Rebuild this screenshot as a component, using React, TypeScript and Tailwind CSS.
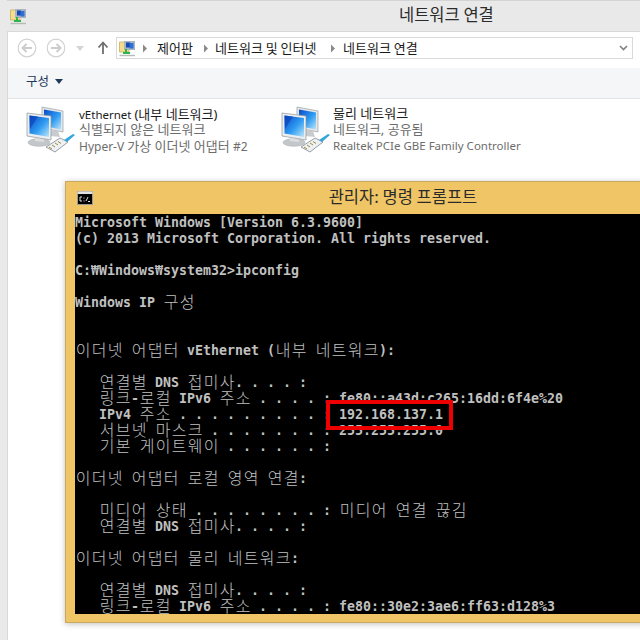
import { Fragment } from 'react';

const rows = [
  'Microsoft Windows [Version 6.3.9600]',
  '(c) 2013 Microsoft Corporation. All rights reserved.',
  '',
  'C:₩Windows₩system32>ipconfig',
  '',
  'Windows IP 구성',
  '',
  '',
  '이더넷 어댑터 vEthernet (내부 네트워크):',
  '',
  '   연결별 DNS 접미사. . . . :',
  '   링크-로컬 IPv6 주소 . . . . : fe80::a43d:c265:16dd:6f4e%20',
  '   IPv4 주소 . . . . . . . . . : 192.168.137.1',
  '   서브넷 마스크 . . . . . . . : 255.255.255.0',
  '   기본 게이트웨이 . . . . . . :',
  '',
  '이더넷 어댑터 로컬 영역 연결:',
  '',
  '   미디어 상태 . . . . . . . . : 미디어 연결 끊김',
  '   연결별 DNS 접미사. . . . :',
  '',
  '이더넷 어댑터 물리 네트워크:',
  '',
  '   연결별 DNS 접미사. . . . :',
  '   링크-로컬 IPv6 주소 . . . . : fe80::30e2:3ae6:ff63:d128%3',
];

// hangul takes two console cells, everything else one
function ConsoleRow({ text }: { text: string }) {
  return (
    <div className="h-4 leading-4 whitespace-pre">
      {Array.from(text).map((ch, i) =>
        /[가-힣]/.test(ch) ? (
          <span key={i} className="inline-block h-4 w-4 text-center align-top font-['Noto_Sans_CJK_KR'] text-[16px] font-light leading-[14px]">
            {ch}
          </span>
        ) : (
          <span key={i} className="mt-[2px] inline-block h-[14px] w-2 align-top text-center leading-[14px]">
            {ch === ' ' ? '\u00a0' : ch}
          </span>
        ),
      )}
    </div>
  );
}

function NetworkIcon() {
  return (
    <svg width="50" height="50" viewBox="0 0 50 50" className="shrink-0">
      <defs>
        <linearGradient id="scr" x1="0" y1="0" x2="1" y2="1">
          <stop offset="0" stopColor="#0a49c8" />
          <stop offset="0.55" stopColor="#2f9cf2" />
          <stop offset="1" stopColor="#bfe6fb" />
        </linearGradient>
      </defs>
      {/* back monitor */}
      <path d="M16 2 L37 6 L37 27 L16 23 Z" fill="#e4e6e8" stroke="#9aa0a6" strokeWidth="0.7" />
      <path d="M18 4.5 L35 7.5 L35 24.5 L18 21 Z" fill="url(#scr)" />
      <path d="M24 25 L32 26 L34 32 L24 31 Z" fill="#c9cccf" />
      {/* front monitor */}
      <path d="M1 8 L25 11 L25 35 L1 31 Z" fill="#eceef0" stroke="#8e959b" strokeWidth="0.7" />
      <path d="M3.5 10.5 L23 13 L23 32 L3.5 28.5 Z" fill="url(#scr)" />
      <path d="M3.5 10.5 L12 11.5 L4 24 Z" fill="#0a3fb8" opacity="0.6" />
      <ellipse cx="13" cy="37.5" rx="11" ry="3.8" fill="#c4c7ca" stroke="#a4a8ac" strokeWidth="0.5" />
      <path d="M9 33 L18 34.5 L18 37 L9 36 Z" fill="#dcdee0" />
      {/* plug */}
      <path d="M20 42 L34 33 L42 37 L29 47 Z" fill="#eef1f3" stroke="#7d8790" strokeWidth="0.8" />
      <path d="M23 42 L26 44 M26 40 L29 42 M29 38 L32 40 M32 36.5 L35 38.5" stroke="#a08a3c" strokeWidth="1" />
      <path d="M38 35 L47 29 L49 30 L41 37 Z" fill="#35a5dc" />
    </svg>
  );
}

function FolderIcon() {
  return (
    <svg width="17" height="17" viewBox="0 0 17 17" className="shrink-0">
      <path d="M0.5 2 H5 L6 3 H10 V12 H0.5 Z" fill="#f5dc8c" stroke="#c9ae5c" strokeWidth="0.8" />
      <path d="M5 1 H16 V10 H5 Z" fill="#aab4c0" />
      <path d="M7 2.5 H11 V7.5 H7 Z" fill="#1747b4" />
      <path d="M10.5 3 H14.5 V8.5 H10.5 Z" fill="#2c6fd6" />
      <path d="M7 9 V13 M4 13 H11" stroke="#2fb34c" strokeWidth="2" />
      <path d="M0.5 15.5 H16" stroke="#b4bcb6" strokeWidth="1.4" />
    </svg>
  );
}

function NavCircle({ dir }: { dir: 'left' | 'right' }) {
  return (
    <svg width="20" height="20" viewBox="0 0 20 20">
      <circle cx="10" cy="10" r="8.8" fill="#fff" stroke="#d2d2d2" strokeWidth="1.2" />
      <path
        d={dir === 'left' ? 'M15 10 H5.5 M9.5 6 L5.5 10 L9.5 14' : 'M5 10 H14.5 M10.5 6 L14.5 10 L10.5 14'}
        fill="none"
        stroke="#cdcdcd"
        strokeWidth="2"
      />
    </svg>
  );
}

function Crumb() {
  return (
    <svg width="6" height="9" viewBox="0 0 6 9" className="shrink-0">
      <path d="M1 0.5 L5 4.5 L1 8.5 Z" fill="#8a8a8a" />
    </svg>
  );
}

export default function App() {
  return (
    <div className="relative h-[640px] w-[640px] overflow-hidden bg-white font-['Noto_Sans','Noto_Sans_CJK_KR',sans-serif]">
      {/* explorer window */}
      <div className="flex h-full flex-col bg-[#e9e9e9] pl-[7px]">
        <header className="relative flex h-[31px] shrink-0 items-center border-t border-[#d4d4d4]">
          <span className="ml-[3px]">
            <FolderIcon />
          </span>
          <span className="absolute left-[392px] top-[3px] whitespace-nowrap font-['Noto_Sans_CJK_KR'] text-[16.5px] leading-5 text-[#2b2b2b]">
            네트워크 연결
          </span>
        </header>
        <main className="flex min-h-0 flex-1 flex-col border-l border-t border-[#d9d9d9] bg-white">
          <div className="flex h-[36px] shrink-0 items-center pb-[4px] pl-[9px]">
            <NavCircle dir="left" />
            <span className="ml-[9px]">
              <NavCircle dir="right" />
            </span>
            <svg width="8" height="5" viewBox="0 0 8 5" className="ml-[10px]">
              <path d="M0 0 H8 L4 5 Z" fill="#d4d4d4" />
            </svg>
            <svg width="12" height="14" viewBox="0 0 12 14" className="ml-[13px]">
              <path d="M6 13 V2 M1.5 6.5 L6 1.5 L10.5 6.5" fill="none" stroke="#6f6f6f" strokeWidth="1.8" />
            </svg>
            <div className="ml-[7px] flex h-[22px] w-[517px] shrink-0 items-center border border-[#d9d9d9] pl-[2px] font-['Noto_Sans_CJK_KR'] text-[13px] text-[#1a1a1a]">
              <FolderIcon />
              <span className="ml-[6px]"><Crumb /></span>
              <span className="ml-[9px] w-[46px]">제어판</span>
              <Crumb />
              <span className="ml-[6px] w-[115px] whitespace-nowrap">네트워크 및 인터넷</span>
              <Crumb />
              <span className="ml-[7px] whitespace-nowrap">네트워크 연결</span>
              <svg width="9" height="6" viewBox="0 0 9 6" className="ml-auto mr-[4px]">
                <path d="M1 1 L4.5 4.5 L8 1" fill="none" stroke="#808080" strokeWidth="1.6" />
              </svg>
            </div>
          </div>
          <div className="flex h-[31px] shrink-0 items-center border-b border-[#e3e4e6] bg-[#f5f6f7] pb-[3px] pl-[18px] font-['Noto_Sans_CJK_KR'] text-[12.5px] text-[#1e395b]">
            구성
            <svg width="8" height="5" viewBox="0 0 8 5" className="ml-[6px]">
              <path d="M0 0 H8 L4 5 Z" fill="#1e395b" />
            </svg>
          </div>
          <div className="flex flex-1 items-start pl-[18px] pt-[6px] text-[11.5px] leading-4">
            <div className="flex w-[255px] shrink-0 gap-[3px]">
              <NetworkIcon />
              <div className="pt-[1px] text-[#6d6d6d]">
                <div className="h-4 whitespace-nowrap text-[#1a1a1a]">
                  vEthernet <span className="text-[13px]">(내부 네트워크)</span>
                </div>
                <div className="h-4 whitespace-nowrap text-[13px] leading-[14px]">식별되지 않은 네트워크</div>
                <div className="h-4 whitespace-nowrap text-[12px]">
                  Hyper-V <span className="text-[13px]">가상 이더넷 어댑터</span> #2
                </div>
              </div>
            </div>
            <div className="flex gap-[2px]">
              <NetworkIcon />
              <div className="pt-[1px] text-[#6d6d6d]">
                <div className="h-4 whitespace-nowrap text-[13px] leading-[14px] text-[#1a1a1a]">물리 네트워크</div>
                <div className="h-4 whitespace-nowrap text-[13px] leading-[14px]">네트워크, 공유됨</div>
                <div className="h-4 whitespace-nowrap">Realtek PCIe GBE Family Controller</div>
              </div>
            </div>
          </div>
        </main>
      </div>

      {/* command prompt over the explorer window */}
      <section className="absolute left-[65px] top-[181px] flex w-[676px] flex-col border border-[#c9a85f] bg-[#f0c566] shadow-[0_1px_6px_rgba(0,0,0,0.25)]">
        <div className="relative flex h-[32px] items-center pl-[11px]">
          <svg width="16" height="14" viewBox="0 0 16 14">
            <rect width="16" height="14" fill="#9a9a9a" />
            <rect x="0.5" y="0.5" width="15" height="2.5" fill="#e2e2e2" />
            <rect x="1" y="3" width="14" height="10" fill="#000" />
            <path d="M3 6 H5 M3 6 V10 M3 10 H5 M7 6.5 V7.5 M7 9.5 V10.5 M9 10 L11 6 M11 10.5 H13" stroke="#e0e0e0" strokeWidth="1" fill="none" />
          </svg>
          <span className="absolute inset-x-0 top-[4px] text-center font-['Noto_Sans_CJK_KR'] text-[16.5px] leading-5 text-[#2b2b2b]">
            관리자: 명령 프롬프트
          </span>
        </div>
        <div className="relative mx-[9px] mb-[8px] bg-black font-['DejaVu_Sans_Mono','Noto_Sans_CJK_KR',monospace] text-[13.28px] font-bold text-[#c0c0c0]">
          {rows.map((text, i) => (
            <Fragment key={i}>
              <ConsoleRow text={text} />
            </Fragment>
          ))}
          <div className="absolute left-[251px] top-[186px] h-[30px] w-[127px] border-[4px] border-[#ee0000]" />
        </div>
      </section>
    </div>
  );
}
